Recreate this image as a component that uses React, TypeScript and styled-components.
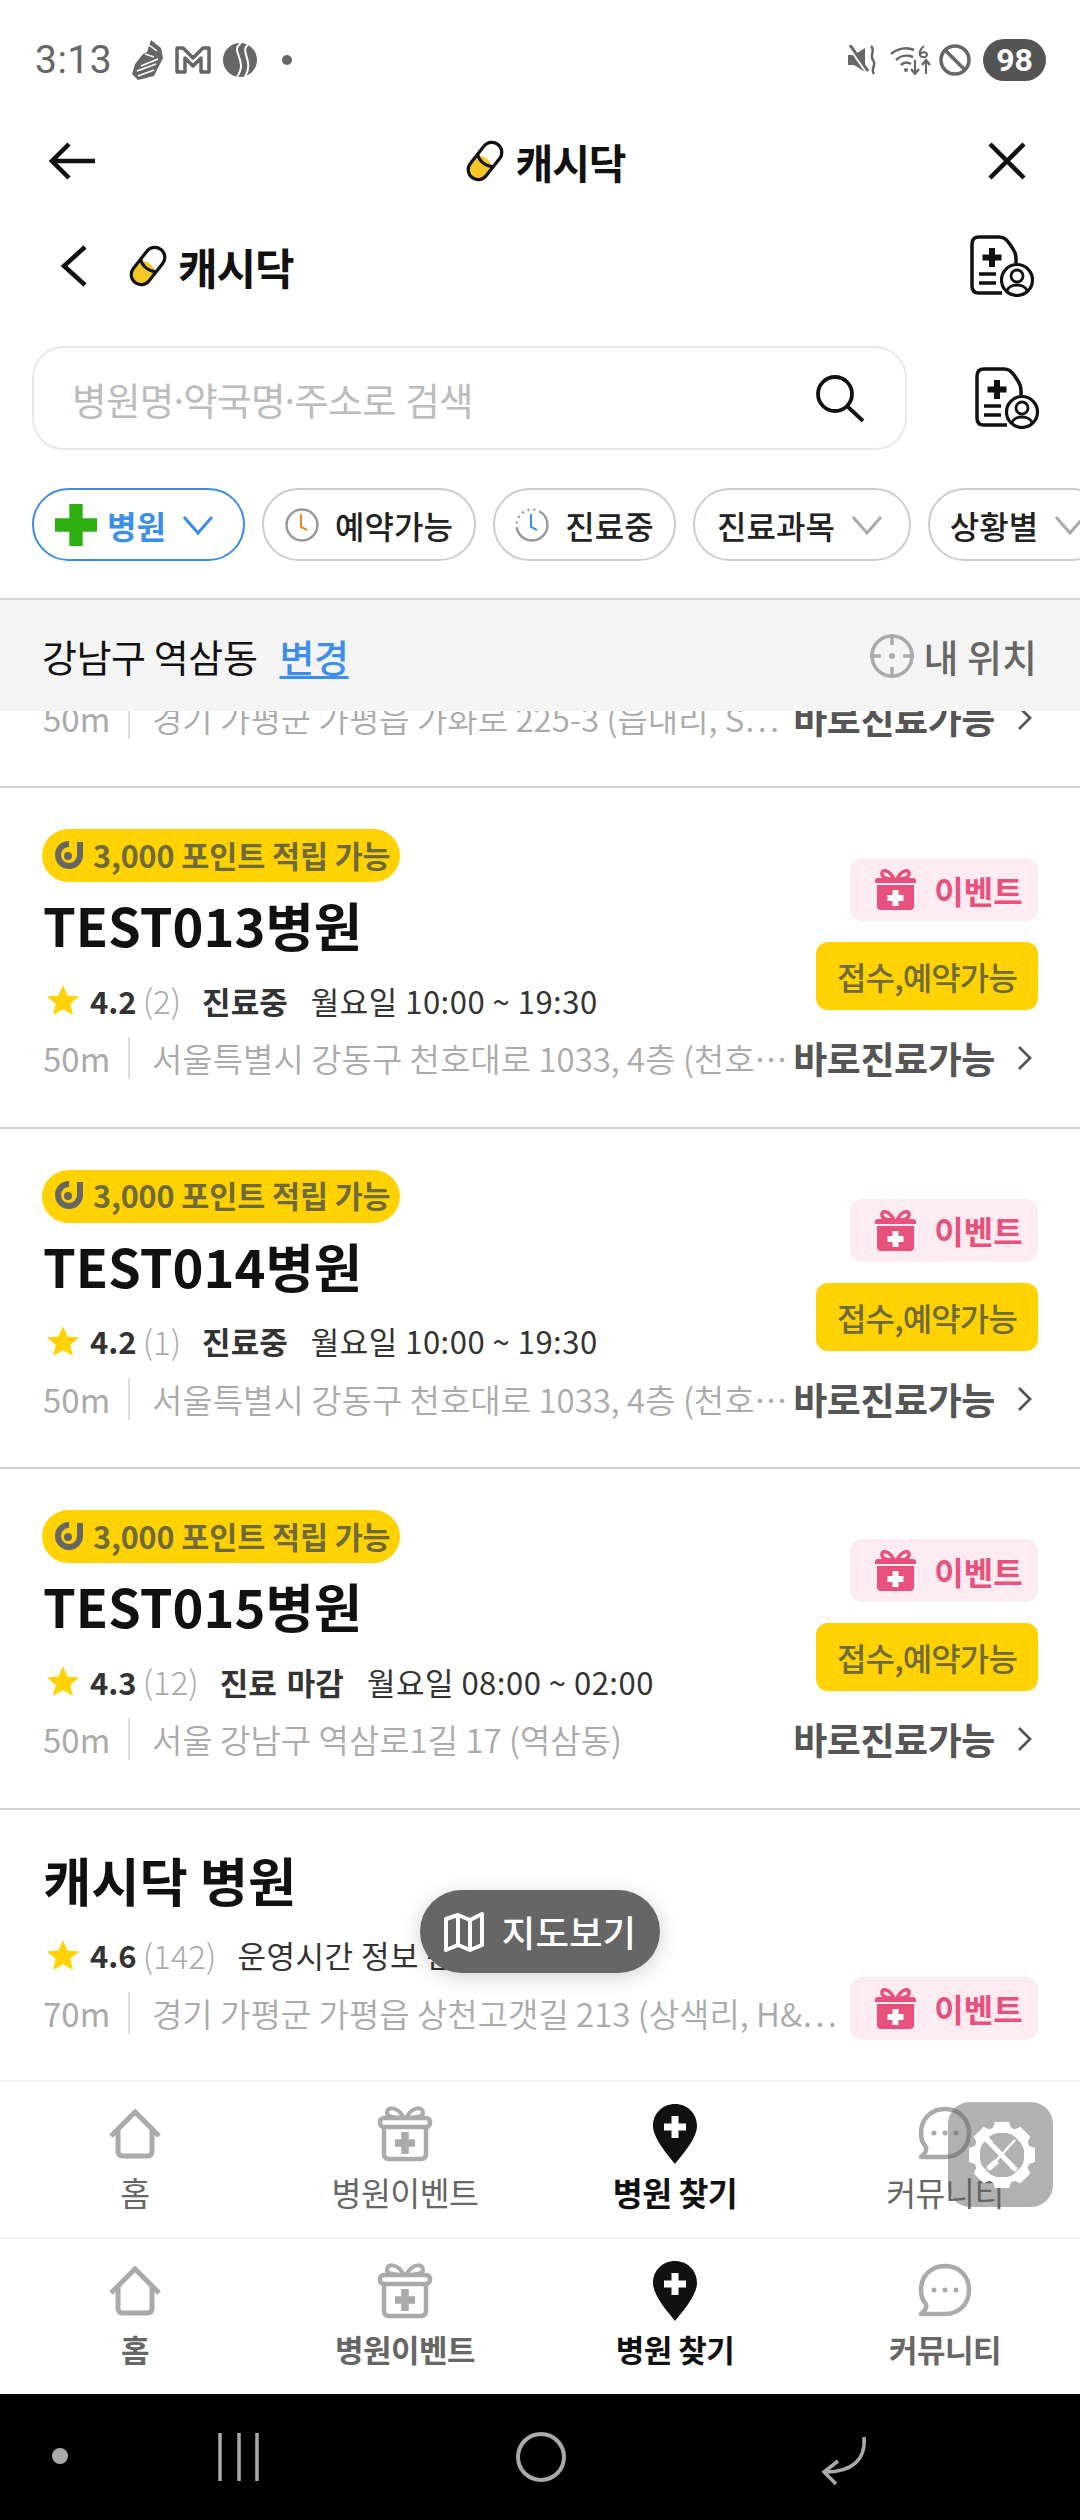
import React from "react"
import styled, { createGlobalStyle } from "styled-components"

const GlobalStyle = createGlobalStyle`
  html, body {
    margin: 0;
    padding: 0;
    background: #fff;
  }
  * {
    box-sizing: border-box;
  }
  body {
    font-family: "Noto Sans CJK KR", "Noto Sans", sans-serif;
    color: #111;
  }
`

const Page = styled.div`
  position: relative;
  width: 1080px;
  height: 2520px;
  overflow: hidden;
  display: flex;
  flex-direction: column;
  background: #fff;
`
const StatusBar = styled.div`
  height: 112px;
  padding: 8px 34px 0 35px;
  display: flex;
  align-items: center;
  color: #666;
`
const Clock = styled.span`
  font-family: Roboto, sans-serif;
  font-size: 39px;
  width: 97px;
  letter-spacing: 0.5px;
`
const StatusIcons = styled.div`
  display: flex;
  align-items: center;
  gap: 12px;
`
const StatusSpacer = styled.div`
  flex: 1;
`
const Battery = styled.span`
  width: 63px;
  height: 42px;
  border-radius: 21px;
  background: #555;
  color: #fff;
  font-family: Roboto, sans-serif;
  font-weight: 700;
  font-size: 32px;
  display: flex;
  align-items: center;
  justify-content: center;
`
const TopHeader = styled.div`
  height: 98px;
  padding: 0 54px 0 49px;
  display: flex;
  align-items: center;
  justify-content: space-between;
`
const Brand = styled.div<{ $size: number; $nudge?: number }>`
  margin-left: ${(p) => p.$nudge || 0}px;
  display: flex;
  align-items: center;
  gap: 10px;
  font-size: ${(p) => p.$size}px;
  font-weight: 700;
  letter-spacing: -1px;
  line-height: 1;
`
const SubHeader = styled.div`
  height: 112px;
  padding: 0 45px 0 60px;
  display: flex;
  align-items: center;
  justify-content: space-between;
`
const SubLeft = styled.div`
  display: flex;
  align-items: center;
  gap: 40px;
`
const SearchRow = styled.div`
  height: 104px;
  margin-top: 24px;
  padding: 0 40px 0 32px;
  display: flex;
  align-items: center;
  justify-content: space-between;
`
const SearchBox = styled.div`
  width: 875px;
  height: 104px;
  padding: 0 40px 0 38px;
  border: 2px solid #e8e8e8;
  border-radius: 32px;
  display: flex;
  align-items: center;
  justify-content: space-between;
  color: #bbb;
  font-family: "Noto Sans", "Noto Sans CJK KR", sans-serif;
  font-size: 37.5px;
  letter-spacing: -0.6px;
`
const Chips = styled.div`
  height: 73px;
  margin-top: 38px;
  padding-left: 32px;
  display: flex;
  gap: 17px;
  overflow: hidden;
`
const Chip = styled.div<{ $active?: boolean; $width: number; $inset?: number }>`
  flex: none;
  width: ${(p) => p.$width}px;
  height: 73px;
  padding-right: ${(p) => p.$inset || 0}px;
  border: 2px solid ${(p) => (p.$active ? "#3d8ce8" : "#ccc")};
  border-radius: 37px;
  color: ${(p) => (p.$active ? "#3b8eec" : "#222")};
  font-size: 32px;
  font-weight: ${(p) => (p.$active ? 700 : 500)};
  display: flex;
  align-items: center;
  justify-content: center;
  gap: 16px;
`
const LocationBar = styled.div`
  position: relative;
  z-index: 1;
  height: 113px;
  margin-top: 37px;
  padding: 0 43px 0 42px;
  border-top: 2px solid #d6d6d6;
  background: #f4f4f4;
  display: flex;
  align-items: center;
  justify-content: space-between;
`
const Area = styled.div`
  display: flex;
  align-items: center;
  gap: 22px;
  font-size: 38px;
  letter-spacing: -0.4px;
`
const ChangeLink = styled.span`
  color: #3b8eec;
  font-weight: 500;
  text-decoration: underline;
  text-underline-offset: 4px;
`
const MyLocation = styled.div`
  display: flex;
  align-items: center;
  gap: 10px;
  font-size: 38px;
  font-weight: 500;
  color: #666;
`
const ClippedRow = styled.div`
  height: 75px;
  padding: 0 42px 0 43px;
  overflow: hidden;
`
const ClippedInner = styled.div`
  margin-top: -27px;
`
const Item = styled.div<{ $top: number; $height: number }>`
  height: ${(p) => p.$height}px;
  padding: ${(p) => p.$top}px 42px 0 43px;
  border-top: 2px solid #d2d2d2;
`
const ItemMain = styled.div`
  display: flex;
  justify-content: space-between;
`
const ItemLeft = styled.div`
  display: flex;
  flex-direction: column;
`
const ItemRight = styled.div`
  display: flex;
  flex-direction: column;
  align-items: flex-end;
  gap: 21px;
  padding-top: 29px;
`
const PointBadge = styled.div`
  width: 358px;
  height: 53px;
  margin-left: -1px;
  padding: 0 0 2px 12px;
  border-radius: 27px;
  background: #ffd200;
  color: #6f6a3e;
  font-size: 30.5px;
  font-weight: 700;
  letter-spacing: -0.1px;
  white-space: nowrap;
  display: flex;
  align-items: center;
  gap: 9px;
`
const Title = styled.div<{ $flush?: boolean }>`
  height: 80px;
  margin-top: ${(p) => (p.$flush ? 0 : 2)}px;
  font-size: 52.500px;
  line-height: 80px;
  font-weight: 700;
  color: #111;
`
const RatingRow = styled.div`
  height: 48px;
  margin-top: 12px;
  display: flex;
  align-items: center;
  font-size: 31px;
  color: #333;
  white-space: nowrap;
`
const Star = styled.svg`
  width: 32px;
  height: 32px;
  margin: 0 11px 0 4px;
`
const Score = styled.span`
  font-weight: 700;
`
const Reviews = styled.span`
  margin-left: 6px;
  color: #aaa;
  font-size: 33px;
  font-weight: 300;
`
const OpenState = styled.span`
  margin-left: 21px;
  font-weight: 700;
  word-spacing: 3px;
`
const Hours = styled.span<{ $gap: number }>`
  margin-left: ${(p) => p.$gap}px;
  letter-spacing: 0.5px;
`
const AddressRow = styled.div`
  height: 42px;
  margin-top: 13px;
  display: flex;
  align-items: center;
  white-space: nowrap;
`
const Distance = styled.span`
  flex: none;
  width: 87px;
  height: 42px;
  border-right: 2px solid #ddd;
  color: #aaa;
  font-size: 33px;
  line-height: 42px;
`
const Address = styled.span`
  flex: 1;
  min-width: 0;
  margin-left: 22px;
  color: #aaa;
  font-size: 33px;
  line-height: 42px;
  font-weight: 350;
`
const DirectLink = styled.span`
  flex: none;
  margin-right: 6px;
  display: flex;
  align-items: center;
  gap: 22px;
  color: #555;
  font-size: 37px;
  font-weight: 700;
  letter-spacing: -0.4px;
`
const EventTag = styled.div<{ $inline?: boolean }>`
  flex: none;
  width: 188px;
  height: 63px;
  margin: ${(p) => (p.$inline ? "-21px 0 -12px 0" : "0")};
  padding-left: 10px;
  border-radius: 12px;
  background: #fcebf0;
  color: #e8517c;
  font-size: 32px;
  font-weight: 700;
  display: flex;
  align-items: center;
  justify-content: center;
  gap: 18px;
`
const AvailableTag = styled.div`
  width: 222px;
  height: 68px;
  border-radius: 12px;
  background: #ffd200;
  color: #6f6a3e;
  font-size: 32px;
  font-weight: 500;
  letter-spacing: -0.9px;
  display: flex;
  align-items: center;
  justify-content: center;
`
const TabBar = styled.div`
  height: 157px;
  border-top: 2px solid #f2f2f2;
  display: grid;
  grid-template-columns: repeat(4, 270px);
`
const Tab = styled.div<{ $active?: boolean; $bold?: boolean }>`
  display: flex;
  flex-direction: column;
  align-items: center;
  padding-top: 19px;
  color: ${(p) => (p.$active ? "#111" : "#666")};
  font-size: ${(p) => (p.$bold ? 31 : 32.5)}px;
  font-weight: ${(p) => (p.$active || p.$bold ? 700 : 400)};
  letter-spacing: -0.5px;
`
const TabIcon = styled.div`
  height: 66px;
  display: flex;
  align-items: center;
  justify-content: center;
`
const TabLabel = styled.div`
  height: 46px;
  margin-top: 2px;
  line-height: 46px;
`
const NavBar = styled.div`
  flex: 1;
  background: #000;
  position: relative;
`
const MapButton = styled.div`
  position: absolute;
  left: 420px;
  top: 1890px;
  width: 240px;
  height: 83px;
  border-radius: 42px;
  background: #666;
  color: #fff;
  font-size: 36.5px;
  font-weight: 500;
  display: flex;
  align-items: center;
  justify-content: center;
  gap: 18px;
  box-shadow: 0 4px 20px rgba(0, 0, 0, 0.18);
`
const ToolsBadge = styled.div`
  position: absolute;
  left: 948px;
  top: 2102px;
  width: 105px;
  height: 105px;
  padding: 20px 0 0 2px;
  border-radius: 22px;
  background: rgba(100, 100, 100, 0.5);
  display: flex;
  justify-content: center;
`
const NavIcons = styled.svg`
  position: absolute;
  left: 0;
  top: 0;
`
const DotIcon = styled.svg`
  margin-left: 13px;
`
const WifiIcon = styled.svg`
  margin-right: -5px;
`
const CrossIcon = styled.svg`
  margin-right: -6px;
`

const Pill = () => (
  <svg width="40" height="42" viewBox="0 0 40 42">
    <g transform="rotate(38 20 21)">
      <rect x="10" y="0" width="20" height="42" rx="10" fill="#fff" />
      <path d="M10 22 C15 17 25 17 30 22 V32 A10 10 0 0 1 10 32 Z" fill="#f4c926" />
      <path d="M10 20 C15 25 25 25 30 20" fill="none" stroke="#111" strokeWidth="3" />
      <rect x="10" y="0" width="20" height="42" rx="10" fill="none" stroke="#111" strokeWidth="3.2" />
    </g>
  </svg>
)

const ChartIcon = () => (
  <svg width="66" height="62" viewBox="0 0 66 62" fill="none" stroke="#111">
    <path d="M33 58 H10 Q3 58 3 51 V9 Q3 2 10 2 H30 Q36 2 40 8 L44 14 Q47 18 47 24 V28" strokeWidth="3.5" />
    <path d="M23 13 V32 M13.500 22.500 H32.500" strokeWidth="6" />
    <path d="M10 39 H27 M10 48 H27" strokeWidth="3.5" />
    <circle cx="48" cy="45" r="15.500" strokeWidth="3.2" fill="#fff" />
    <circle cx="48" cy="41" r="6" strokeWidth="2.800" />
    <path d="M38 56 C40 48 56 48 58 56" strokeWidth="2.800" />
  </svg>
)

const ChevronDown = ({ color }: { color: string }) => (
  <svg width="32" height="20" viewBox="0 0 32 20" fill="none" stroke={color} strokeWidth="3">
    <path d="M2 2 L16 18 L30 2" />
  </svg>
)

const ClockIcon = ({ hand, dashed }: { hand: string; dashed?: boolean }) => (
  <svg width="34" height="36" viewBox="0 0 34 36" fill="none">
    <circle cx="17" cy="18" r="15.5" stroke="#999" strokeWidth="2.5" strokeDasharray={dashed ? "46 4 2 4 2 4 2 4 2 4 2 4" : undefined} />
    <path d="M16 7 V20 L22 23" stroke={hand} strokeWidth="2" />
  </svg>
)

const GiftIcon = () => (
  <svg width="41" height="41" viewBox="0 0 41 41">
    <path d="M19 10 C14 0 6 0 7 5 C7 9 13 10 19 10 M22 10 C27 0 35 0 34 5 C34 9 28 10 22 10" fill="none" stroke="#e8517c" strokeWidth="3.5" />
    <path d="M3 9 H38 Q41 9 41 12 V14 H0 V12 Q0 9 3 9 Z" fill="#e8517c" />
    <path d="M2 16 H39 V37 Q39 41 35 41 H6 Q2 41 2 37 Z" fill="#e8517c" />
    <path d="M20.500 21 V37 M12.500 29 H28.500" stroke="#fff" strokeWidth="6" />
  </svg>
)

const PointLogo = () => (
  <svg width="30" height="30" viewBox="0 0 30 30" fill="none" stroke="#666" strokeWidth="6">
    <path d="M26 2 V15 A11 11 0 1 1 15 4" />
    <circle cx="14" cy="16" r="3" fill="#666" strokeWidth="2" />
  </svg>
)

const ChevronRight = () => (
  <svg width="15" height="26" viewBox="0 0 15 26" fill="none" stroke="#555" strokeWidth="2.8">
    <path d="M2 2 L13 13 L2 24" />
  </svg>
)

const HomeIcon = () => (
  <svg width="52" height="50" viewBox="0 0 52 50" fill="none" stroke="#aaa" strokeWidth="5">
    <path d="M2 27 L26 3 L50 27" />
    <path d="M9 20 V42 Q9 47 14 47 H38 Q43 47 43 42 V20" />
  </svg>
)

const TabGiftIcon = () => (
  <svg width="56" height="56" viewBox="0 0 56 56" fill="none" stroke="#aaa">
    <path d="M27 12 C20 -1 9 1 10 7 C10 11 20 12 27 12 M29 12 C36 -1 47 1 46 7 C46 11 36 12 29 12" strokeWidth="4" />
    <rect x="3" y="12" width="50" height="9" rx="4" strokeWidth="4.500" />
    <path d="M7 21 V48 Q7 53 12 53 H44 Q49 53 49 48 V21" strokeWidth="4.500" />
    <path d="M28 26 V48 M18 37 H38" strokeWidth="7.500" />
  </svg>
)

const PinIcon = () => (
  <svg width="44" height="60" viewBox="0 0 44 60">
    <path d="M22 0 C34 0 44 9 44 22 C44 34 30 50 22 60 C14 50 0 34 0 22 C0 9 10 0 22 0 Z" fill="#111" />
    <path d="M22 12 V34 M11 23 H33" stroke="#fff" strokeWidth="7" />
  </svg>
)

const ChatIcon = () => (
  <svg width="54" height="56" viewBox="0 0 54 56" fill="none" stroke="#aaa" strokeWidth="4.500">
    <path d="M27 3 C41 3 51 13 51 27 C51 41 41 51 27 51 H3 C8 47 9 44 8 41 C4 37 3 32 3 27 C3 13 13 3 27 3 Z" strokeLinejoin="round" />
    <circle cx="16" cy="27" r="2.500" fill="#aaa" stroke="none" />
    <circle cx="27" cy="27" r="2.500" fill="#aaa" stroke="none" />
    <circle cx="38" cy="27" r="2.500" fill="#aaa" stroke="none" />
  </svg>
)

const teeth = [0, 45, 90, 135, 180, 225, 270, 315]

const GearIcon = () => (
  <svg width="66" height="66" viewBox="0 0 66 66">
    {teeth.map((angle) => (
      <path key={angle} d="M26 0 H40 L44 11 H22 Z" fill="#fff" transform={`rotate(${angle} 33 33)`} />
    ))}
    <circle cx="33" cy="33" r="25.500" fill="none" stroke="#fff" strokeWidth="6" />
    <path d="M21 21 L45 46" stroke="#fff" strokeWidth="5" />
    <path d="M46 18 L25 41" stroke="#fff" strokeWidth="2.500" />
    <path d="M26 37 L18 44 Q17 49 22 48 L30 41 Z" fill="#fff" />
    <path d="M14 18 L20 23 L24 20 L19 14 Q12 13 14 18 Z" fill="#fff" />
    <path d="M42 42 L49 46 L46 50 L41 46 Z" fill="#fff" />
  </svg>
)

const items = [
  {
    name: "TEST013병원",
    score: "4.2",
    reviews: "(2)",
    state: "진료중",
    hours: "월요일 10:00 ~ 19:30",
    address: "서울특별시 강동구 천호대로 1033, 4층 (천호…",
  },
  {
    name: "TEST014병원",
    score: "4.2",
    reviews: "(1)",
    state: "진료중",
    hours: "월요일 10:00 ~ 19:30",
    address: "서울특별시 강동구 천호대로 1033, 4층 (천호…",
  },
  {
    name: "TEST015병원",
    score: "4.3",
    reviews: "(12)",
    state: "진료 마감",
    hours: "월요일 08:00 ~ 02:00",
    address: "서울 강남구 역삼로1길 17 (역삼동)",
  },
]

const tabs = [
  { label: "홈", icon: <HomeIcon /> },
  { label: "병원이벤트", icon: <TabGiftIcon /> },
  { label: "병원 찾기", icon: <PinIcon />, active: true },
  { label: "커뮤니티", icon: <ChatIcon /> },
]

const StarIcon = () => (
  <Star viewBox="0 0 32 32">
    <path d="M16 1 L20.500 11.500 L32 12.500 L23.200 20 L26 31 L16 25.200 L6 31 L8.800 20 L0 12.500 L11.500 11.500 Z" fill="#ffd200" />
  </Star>
)

const Direct = () => (
  <DirectLink>
    바로진료가능
    <ChevronRight />
  </DirectLink>
)

export default function App() {
  return (
    <Page>
      <GlobalStyle />
      <StatusBar>
        <Clock>3:13</Clock>
        <StatusIcons>
          <svg width="31" height="40" viewBox="0 0 31 40" fill="#666">
            <path d="M19 0 L29 8 L31 18 L22 36 L6 40 L0 34 L3 24 L11 14 L15 12 Z" />
            <path d="M6 36 L22 30 M5 31 L24 24 M9 26 L26 19" stroke="#fff" strokeWidth="1.800" />
            <path d="M17 5 L25 11 M13 14 L22 17" stroke="#fff" strokeWidth="1.500" />
          </svg>
          <svg width="36" height="28" viewBox="0 0 36 28" fill="none" stroke="#666" strokeWidth="3.500">
            <path d="M2 26 V2 H8 L18 12 L28 2 H34 V26 H26 V12 L18 20 L10 12 V26 Z" strokeLinejoin="round" />
          </svg>
          <svg width="34" height="34" viewBox="0 0 34 34">
            <circle cx="17" cy="17" r="17" fill="#666" />
            <path d="M18 0 C6 8 26 17 14 34" fill="none" stroke="#fff" strokeWidth="2" />
            <path d="M26 1 C15 8 32 17 22 34" fill="none" stroke="#fff" strokeWidth="2" />
          </svg>
          <DotIcon width="10" height="10" viewBox="0 0 10 10">
            <circle cx="5" cy="5" r="5" fill="#666" />
          </DotIcon>
        </StatusIcons>
        <StatusSpacer />
        <StatusIcons>
          <svg width="30" height="30" viewBox="0 0 30 30" fill="#666">
            <path d="M0 10 H6 L17 3 V27 L6 20 H0 Z" />
            <path d="M1 1 L20 28" stroke="#fff" strokeWidth="4" />
            <path d="M2 0 L20 26" stroke="#666" strokeWidth="3" />
            <path d="M23 1 C28 6 21 10 25 15 C29 20 22 24 26 29" fill="none" stroke="#666" strokeWidth="2.500" />
          </svg>
          <WifiIcon width="42" height="30" viewBox="0 0 42 30" fill="none" stroke="#666" strokeWidth="2.500">
            <path d="M1 9 C8 3 17 2 24 5 M6 15 C11 10 18 10 23 12 M11 20 C14 17 18 17 21 19" />
            <circle cx="16" cy="25" r="2" fill="#666" stroke="none" />
            <path d="M25 15 V29 M21 24 L25 29 L29 24 M36 29 V15 M32 20 L36 15 L40 20" strokeWidth="2.200" />
            <path d="M34 1 C30 4 29 8 30 10 C31 13 36 13 37 10 C37 7 33 6 30 9" strokeWidth="2" />
          </WifiIcon>
          <svg width="32" height="32" viewBox="0 0 32 32" fill="none" stroke="#666" strokeWidth="3.500">
            <circle cx="16" cy="16" r="14" />
            <path d="M6 6 L26 26" />
          </svg>
          <Battery>98</Battery>
        </StatusIcons>
      </StatusBar>

      <TopHeader>
        <svg width="48" height="38" viewBox="0 0 48 38" fill="none" stroke="#111" strokeWidth="4.500">
          <path d="M46 19 H4 M20 2 L3 19 L20 36" />
        </svg>
        <Brand $size={41} $nudge={6}>
          <Pill />
          캐시닥
        </Brand>
        <svg width="38" height="38" viewBox="0 0 38 38" fill="none" stroke="#111" strokeWidth="4.500">
          <path d="M2 2 L36 36 M36 2 L2 36" />
        </svg>
      </TopHeader>

      <SubHeader>
        <SubLeft>
          <svg width="28" height="42" viewBox="0 0 28 42" fill="none" stroke="#111" strokeWidth="4.500">
            <path d="M25 2 L4 21 L25 40" />
          </svg>
          <Brand $size={43}>
            <Pill />
            캐시닥
          </Brand>
        </SubLeft>
        <ChartIcon />
      </SubHeader>

      <SearchRow>
        <SearchBox>
          병원명·약국명·주소로 검색
          <svg width="50" height="48" viewBox="0 0 50 48" fill="none" stroke="#111" strokeWidth="3.800">
            <circle cx="20" cy="20" r="17" />
            <path d="M32 32 L48 47" />
          </svg>
        </SearchBox>
        <ChartIcon />
      </SearchRow>

      <Chips>
        <Chip $active $width={213} $inset={8}>
          <CrossIcon width="42" height="42" viewBox="0 0 44 44">
            <path d="M15 0 H29 V15 H44 V29 H29 V44 H15 V29 H0 V15 H15 Z" fill="#2cb010" />
          </CrossIcon>
          병원
          <ChevronDown color="#3d8ce8" />
        </Chip>
        <Chip $width={214}>
          <ClockIcon hand="#e08a1e" />
          예약가능
        </Chip>
        <Chip $width={183}>
          <ClockIcon hand="#3d8ce8" dashed />
          진료중
        </Chip>
        <Chip $width={218} $inset={4}>
          진료과목
          <ChevronDown color="#aaa" />
        </Chip>
        <Chip $width={180}>
          상황별
          <ChevronDown color="#aaa" />
        </Chip>
      </Chips>

      <LocationBar>
        <Area>
          강남구 역삼동
          <ChangeLink>변경</ChangeLink>
        </Area>
        <MyLocation>
          <svg width="44" height="44" viewBox="0 0 44 44" fill="none" stroke="#aaa" strokeWidth="3.500">
            <circle cx="22" cy="22" r="20" />
            <path d="M22 0 V11 M22 33 V44 M0 22 H11 M33 22 H44" />
            <circle cx="22" cy="22" r="3" fill="#aaa" stroke="none" />
          </svg>
          내 위치
        </MyLocation>
      </LocationBar>

      <ClippedRow>
        <ClippedInner>
          <AddressRow>
            <Distance>50m</Distance>
            <Address>경기 가평군 가평읍 가화로 225-3 (읍내리, S…</Address>
            <Direct />
          </AddressRow>
        </ClippedInner>
      </ClippedRow>

      {items.map((item) => (
        <Item key={item.name} $top={41} $height={340.67}>
          <ItemMain>
            <ItemLeft>
              <PointBadge>
                <PointLogo />
                3,000 포인트 적립 가능
              </PointBadge>
              <Title>{item.name}</Title>
              <RatingRow>
                <StarIcon />
                <Score>{item.score}</Score>
                <Reviews>{item.reviews}</Reviews>
                <OpenState>{item.state}</OpenState>
                <Hours $gap={23}>{item.hours}</Hours>
              </RatingRow>
            </ItemLeft>
            <ItemRight>
              <EventTag>
                <GiftIcon />
                이벤트
              </EventTag>
              <AvailableTag>접수,예약가능</AvailableTag>
            </ItemRight>
          </ItemMain>
          <AddressRow>
            <Distance>50m</Distance>
            <Address>{item.address}</Address>
            <Direct />
          </AddressRow>
        </Item>
      ))}

      <Item $top={29} $height={272}>
        <Title $flush>캐시닥 병원</Title>
        <RatingRow>
          <StarIcon />
          <Score>4.6</Score>
          <Reviews>(142)</Reviews>
          <Hours $gap={21}>운영시간 정보 준비중</Hours>
        </RatingRow>
        <AddressRow>
          <Distance>70m</Distance>
          <Address>경기 가평군 가평읍 상천고갯길 213 (상색리, H&…</Address>
          <EventTag $inline>
            <GiftIcon />
            이벤트
          </EventTag>
        </AddressRow>
      </Item>

      <TabBar>
        {tabs.map((tab) => (
          <Tab key={tab.label} $active={tab.active}>
            <TabIcon>{tab.icon}</TabIcon>
            <TabLabel>{tab.label}</TabLabel>
          </Tab>
        ))}
      </TabBar>
      <TabBar>
        {tabs.map((tab) => (
          <Tab key={tab.label} $active={tab.active} $bold>
            <TabIcon>{tab.icon}</TabIcon>
            <TabLabel>{tab.label}</TabLabel>
          </Tab>
        ))}
      </TabBar>

      <NavBar>
        <NavIcons width="1080" height="126" viewBox="0 0 1080 126" fill="none" stroke="#aaa">
          <circle cx="60" cy="62" r="8" fill="#aaa" stroke="none" />
          <path d="M220 39 V87 M239 39 V87 M257 39 V87" strokeWidth="3.500" />
          <circle cx="541" cy="63" r="23" strokeWidth="4" />
          <path d="M864 43 C866 66 852 78 825 78 M838 67 L824 78 L836 90" strokeWidth="3.500" />
        </NavIcons>
      </NavBar>

      <MapButton>
        <svg width="40" height="40" viewBox="0 0 40 40" fill="none" stroke="#fff" strokeWidth="4">
          <path d="M2 7 L14 3 L26 8 L38 2 V33 L26 38 L14 33 L2 38 Z" strokeLinejoin="round" />
          <path d="M14 3 V33 M26 8 V38" />
        </svg>
        지도보기
      </MapButton>

      <ToolsBadge>
        <GearIcon />
      </ToolsBadge>
    </Page>
  )
}
